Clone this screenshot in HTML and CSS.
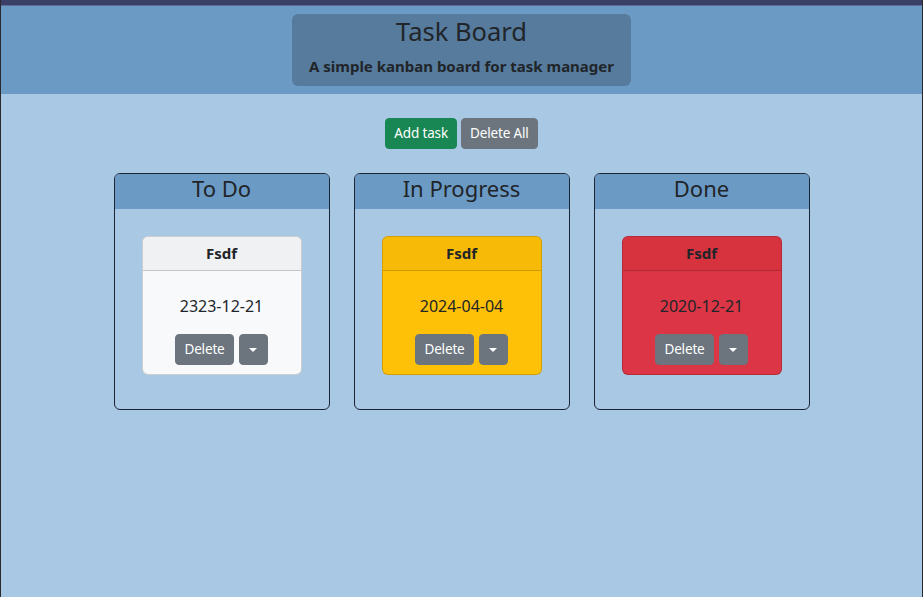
FILE: index.html
```html
<!DOCTYPE html>
<html lang="en">
<head>
<meta charset="utf-8">
<title>Task Board</title>
<link rel="stylesheet" href="styles.css">
</head>
<body>
<div class="topbar"></div>
<header class="hero">
  <div class="hero-box">
    <h2 class="hero-title">Task Board</h2>
    <p class="hero-sub">A simple kanban board for task manager</p>
  </div>
</header>
<main class="main">
  <div class="actions">
    <button class="btn btn-success">Add task</button>
    <button class="btn btn-secondary">Delete All</button>
  </div>
  <div class="columns">
    <section class="lane">
      <h4 class="lane-title">To Do</h4>
      <div class="lane-body">
        <div class="card card-light">
          <div class="card-header">Fsdf</div>
          <div class="card-body">
            <p class="card-date">2323-12-21</p>
            <div class="card-actions">
              <button class="btn btn-secondary">Delete</button>
              <button class="btn btn-secondary btn-caret"><span class="caret"></span></button>
            </div>
          </div>
        </div>
      </div>
    </section>
    <section class="lane">
      <h4 class="lane-title">In Progress</h4>
      <div class="lane-body">
        <div class="card card-warning">
          <div class="card-header">Fsdf</div>
          <div class="card-body">
            <p class="card-date">2024-04-04</p>
            <div class="card-actions">
              <button class="btn btn-secondary">Delete</button>
              <button class="btn btn-secondary btn-caret"><span class="caret"></span></button>
            </div>
          </div>
        </div>
      </div>
    </section>
    <section class="lane">
      <h4 class="lane-title">Done</h4>
      <div class="lane-body">
        <div class="card card-danger">
          <div class="card-header">Fsdf</div>
          <div class="card-body">
            <p class="card-date">2020-12-21</p>
            <div class="card-actions">
              <button class="btn btn-secondary">Delete</button>
              <button class="btn btn-secondary btn-caret"><span class="caret"></span></button>
            </div>
          </div>
        </div>
      </div>
    </section>
  </div>
</main>
</body>
</html>
```
FILE: styles.css
```css
* { box-sizing: border-box; }
html, body { height: 100%; }
body {
  margin: 0;
  background: #a9c8e3;
  color: #212529;
  font-family: "Noto Sans", "Open Sans", sans-serif;
  font-size: 16px;
  line-height: 1.5;
  border-left: 1px solid #2a2a2e;
  border-right: 1px solid #2a2a2e;
}
.topbar {
  height: 6px;
  background: #393f66;
  border-bottom: 1px solid #5e6d97;
}
.hero {
  background: #6b9ac4;
  padding: 8px 0 8px;
  display: flex;
  justify-content: center;
}
.hero-box {
  background: #567b9d;
  border-radius: 6px;
  width: 339px;
  padding: 0 8px 8px;
  text-align: center;
}
.hero-title {
  margin: 0;
  font-size: 25.5px;
  font-weight: 400;
  line-height: 34px;
}
.hero-sub {
  margin: 6px 0 0;
  font-size: 15px;
  font-weight: 700;
  line-height: 24px;
}
.main {
  padding-top: 24px;
}
.actions {
  display: flex;
  justify-content: center;
  gap: 4px;
}
.btn {
  font-family: inherit;
  font-size: 13.5px;
  letter-spacing: -0.15px;
  line-height: 21px;
  padding: 4px 8px;
  border: 1px solid transparent;
  border-radius: 4px;
  color: #fff;
  cursor: pointer;
}
.btn-success { background: #198754; border-color: #198754; }
.btn-secondary { background: #6c757d; border-color: #6c757d; }
.columns {
  display: flex;
  justify-content: center;
  gap: 24px;
  margin-top: 24px;
}
.lane {
  width: 216px;
  height: 237px;
  border: 1px solid #1c2536;
  border-radius: 6px;
  overflow: hidden;
}
.lane-title {
  margin: 0;
  height: 35px;
  background: #6b9ac4;
  text-align: center;
  font-size: 22px;
  font-weight: 400;
  line-height: 29px;
}
.lane-body {
  display: flex;
  justify-content: center;
  padding-top: 27px;
}
.card {
  width: 160px;
  border: 1px solid rgba(0, 0, 0, 0.175);
  border-radius: 6px;
  overflow: hidden;
  text-align: center;
}
.card-header {
  height: 34px;
  line-height: 32px;
  font-size: 15px;
  font-weight: 700;
  border-bottom: 1px solid rgba(0, 0, 0, 0.175);
}
.card-body {
  padding: 23px 8px 9px;
}
.card-date {
  margin: 0 0 16px;
  font-size: 16px;
  line-height: 24px;
}
.card-actions {
  display: flex;
  justify-content: center;
  gap: 5px;
}
.card-actions .btn { height: 31px; }
.btn-caret {
  width: 29px;
  display: flex;
  align-items: center;
  justify-content: center;
  padding: 0;
}
.caret {
  width: 0;
  height: 0;
  border-left: 4.5px solid transparent;
  border-right: 4.5px solid transparent;
  border-top: 4.5px solid #fff;
}
.card-light { background: #f8f9fa; }
.card-light .card-header { background: #f0f1f2; }
.card-warning { background: #ffc107; }
.card-warning .card-header { background: #f7bb07; }
.card-danger { background: #dc3545; }
.card-danger .card-header { background: #d6333f; }
```
